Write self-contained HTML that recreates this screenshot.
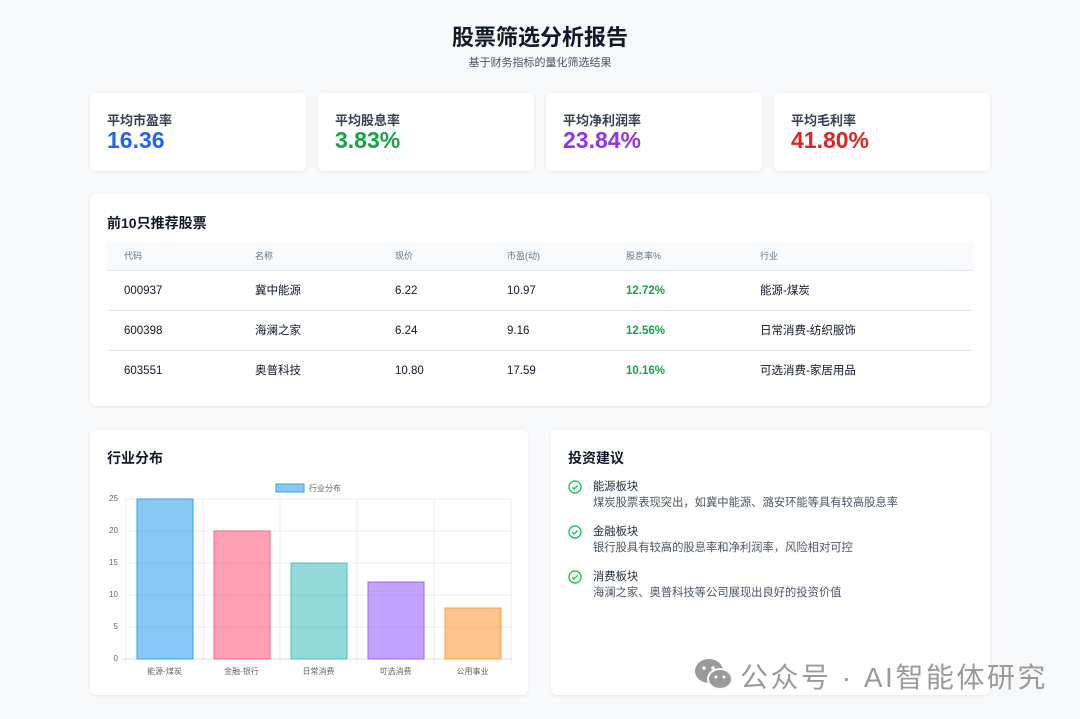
<!DOCTYPE html>
<html><head><meta charset="utf-8"><style>
*{margin:0;padding:0;box-sizing:border-box}
body{width:1080px;height:719px;background:#f8f9fb;font-family:"Liberation Sans","Noto Sans CJK SC",sans-serif;position:relative;overflow:hidden;color:#111827}
.abs{position:absolute}
.card{position:absolute;background:#fff;border-radius:6px;box-shadow:0 1px 3px rgba(0,0,0,.08)}
h1{position:absolute;top:20px;left:0;width:1080px;text-align:center;font-size:22px;font-weight:bold;color:#111827}
.sub{position:absolute;top:54px;width:1080px;text-align:center;font-size:11px;color:#4b5563}
.lbl{position:absolute;left:17px;top:17px;font-size:13px;font-weight:bold;color:#374151}
.val{position:absolute;left:17px;top:34px;font-size:23px;font-weight:bold}
.ct{position:absolute;left:17px;font-size:14px;font-weight:bold;color:#111827}
.th{position:absolute;top:0;height:28px;line-height:28px;font-size:9px;color:#6b7280}
.row{position:absolute;left:17px;width:866px;height:40px;border-top:1px solid #e5e7eb}
.row span{position:absolute;top:0;line-height:40px;font-size:11.5px;color:#111827}
.row .g{color:#16a34a;font-weight:bold}
.sug{position:absolute;left:17px;font-size:11.3px}
.sug .t{position:absolute;left:25px;top:0;color:#1f2937;white-space:nowrap}
.sug .d{position:absolute;left:25px;top:16px;color:#4b5563;white-space:nowrap}
.sug svg{position:absolute;left:0;top:2px}
.yl{position:absolute;width:20px;text-align:right;font-size:8px;color:#666;left:0}
.xl{position:absolute;font-size:8px;color:#666;width:77px;text-align:center;top:666px}
</style></head><body>
<h1>股票筛选分析报告</h1>
<div class="sub">基于财务指标的量化筛选结果</div>

<div class="card" style="left:90px;top:93px;width:216px;height:78px"><div class="lbl">平均市盈率</div><div class="val" style="color:#2563eb">16.36</div></div>
<div class="card" style="left:318px;top:93px;width:216px;height:78px"><div class="lbl">平均股息率</div><div class="val" style="color:#16a34a">3.83%</div></div>
<div class="card" style="left:546px;top:93px;width:216px;height:78px"><div class="lbl">平均净利润率</div><div class="val" style="color:#9333ea">23.84%</div></div>
<div class="card" style="left:774px;top:93px;width:216px;height:78px"><div class="lbl">平均毛利率</div><div class="val" style="color:#dc2626">41.80%</div></div>

<div class="card" style="left:90px;top:194px;width:900px;height:212px">
<div class="ct" style="top:19px">前10只推荐股票</div>
<div class="abs" style="left:17px;top:48px;width:866px;height:28px;background:#f9fafb">
<div class="th" style="left:17px">代码</div><div class="th" style="left:148px">名称</div><div class="th" style="left:288px">现价</div><div class="th" style="left:400px">市盈(动)</div><div class="th" style="left:519px">股息率%</div><div class="th" style="left:653px">行业</div>
</div>
<div class="row" style="top:76px"><span style="left:17px">000937</span><span style="left:148px">冀中能源</span><span style="left:288px">6.22</span><span style="left:400px">10.97</span><span class="g" style="left:519px">12.72%</span><span style="left:653px">能源-煤炭</span></div>
<div class="row" style="top:116px"><span style="left:17px">600398</span><span style="left:148px">海澜之家</span><span style="left:288px">6.24</span><span style="left:400px">9.16</span><span class="g" style="left:519px">12.56%</span><span style="left:653px">日常消费-纺织服饰</span></div>
<div class="row" style="top:156px"><span style="left:17px">603551</span><span style="left:148px">奥普科技</span><span style="left:288px">10.80</span><span style="left:400px">17.59</span><span class="g" style="left:519px">10.16%</span><span style="left:653px">可选消费-家居用品</span></div>
</div>

<div class="card" style="left:90px;top:430px;width:438px;height:265px"><div class="ct" style="top:18px">行业分布</div></div>
<div class="card" style="left:551px;top:430px;width:439px;height:265px">
<div class="ct" style="top:18px">投资建议</div>
<div class="sug" style="top:48px"><svg width="14" height="14" viewBox="0 0 14 14"><circle cx="7" cy="7" r="6" fill="none" stroke="#22c55e" stroke-width="1.4"/><path d="M4.3 7.2l1.8 1.8 3.6-3.6" fill="none" stroke="#22c55e" stroke-width="1.4"/></svg><div class="t">能源板块</div><div class="d">煤炭股票表现突出，如冀中能源、潞安环能等具有较高股息率</div></div>
<div class="sug" style="top:93px"><svg width="14" height="14" viewBox="0 0 14 14"><circle cx="7" cy="7" r="6" fill="none" stroke="#22c55e" stroke-width="1.4"/><path d="M4.3 7.2l1.8 1.8 3.6-3.6" fill="none" stroke="#22c55e" stroke-width="1.4"/></svg><div class="t">金融板块</div><div class="d">银行股具有较高的股息率和净利润率，风险相对可控</div></div>
<div class="sug" style="top:138px"><svg width="14" height="14" viewBox="0 0 14 14"><circle cx="7" cy="7" r="6" fill="none" stroke="#22c55e" stroke-width="1.4"/><path d="M4.3 7.2l1.8 1.8 3.6-3.6" fill="none" stroke="#22c55e" stroke-width="1.4"/></svg><div class="t">消费板块</div><div class="d">海澜之家、奥普科技等公司展现出良好的投资价值</div></div>
</div>

<svg class="abs" style="left:0;top:0" width="1080" height="719">
<g stroke="#ececec" stroke-width="1">
<line x1="126" y1="499" x2="512" y2="499"/><line x1="126" y1="531" x2="512" y2="531"/><line x1="126" y1="563" x2="512" y2="563"/><line x1="126" y1="595" x2="512" y2="595"/><line x1="126" y1="627" x2="512" y2="627"/>
<line x1="126" y1="499" x2="126" y2="664"/><line x1="203" y1="499" x2="203" y2="664"/><line x1="280" y1="499" x2="280" y2="664"/><line x1="357" y1="499" x2="357" y2="664"/><line x1="434" y1="499" x2="434" y2="664"/><line x1="511" y1="499" x2="511" y2="664"/>
</g>
<line x1="122" y1="659" x2="512" y2="659" stroke="#ddd"/>
<rect x="137" y="499" width="56" height="160" fill="rgba(54,162,235,.6)" stroke="#36a2eb"/>
<rect x="214" y="531" width="56" height="128" fill="rgba(255,99,132,.6)" stroke="#ff6384"/>
<rect x="291" y="563" width="56" height="96" fill="rgba(75,192,192,.6)" stroke="#4bc0c0"/>
<rect x="368" y="582" width="56" height="77" fill="rgba(153,102,255,.6)" stroke="#9966ff"/>
<rect x="445" y="608" width="56" height="51" fill="rgba(255,159,64,.6)" stroke="#ff9f40"/>
<rect x="276" y="484" width="28" height="8" fill="rgba(54,162,235,.6)" stroke="#36a2eb"/>
<text x="309" y="491" font-size="8" fill="#666" font-family="Liberation Sans,Noto Sans CJK SC,sans-serif">行业分布</text>
</svg>
<div class="yl" style="left:98px;top:494px">25</div><div class="yl" style="left:98px;top:526px">20</div><div class="yl" style="left:98px;top:558px">15</div><div class="yl" style="left:98px;top:590px">10</div><div class="yl" style="left:98px;top:622px">5</div><div class="yl" style="left:98px;top:654px">0</div>
<div class="xl" style="left:126px">能源-煤炭</div><div class="xl" style="left:203px">金融-银行</div><div class="xl" style="left:280px">日常消费</div><div class="xl" style="left:357px">可选消费</div><div class="xl" style="left:434px">公用事业</div>

<svg class="abs" style="left:694px;top:657px" width="40" height="36" viewBox="0 0 40 36">
<ellipse cx="15" cy="14" rx="14" ry="12" fill="#9a9a9a"/>
<ellipse cx="26" cy="22" rx="12" ry="10" fill="#9a9a9a" stroke="#f8f9fb" stroke-width="2"/>
<circle cx="10" cy="11" r="1.8" fill="#f8f9fb"/><circle cx="19" cy="11" r="1.8" fill="#f8f9fb"/>
<circle cx="22" cy="20" r="1.5" fill="#f8f9fb"/><circle cx="30" cy="20" r="1.5" fill="#f8f9fb"/>
</svg>
<div class="abs" style="left:740px;top:656px;font-size:28px;letter-spacing:2.5px;color:#9a9a9a;white-space:nowrap">公众号 · AI智能体研究</div>
</body></html>
